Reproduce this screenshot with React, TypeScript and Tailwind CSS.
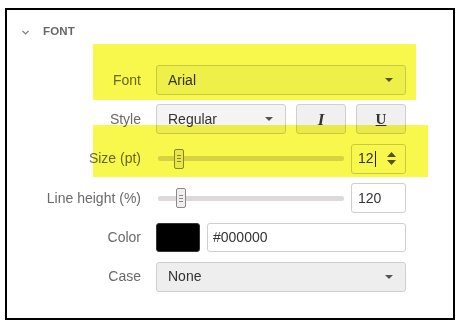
import React from "react";

const Caret = () => (
  <svg width="8" height="4" viewBox="0 0 8 4" className="shrink-0">
    <polygon points="0,0 8,0 4,4" fill="#555" />
  </svg>
);

const Spinner = () => (
  <svg width="9" height="13" viewBox="0 0 9 13" className="shrink-0">
    <polygon points="4.5,0 9,5 0,5" fill="#555" />
    <polygon points="0,8 9,8 4.5,13" fill="#555" />
  </svg>
);

const Label = ({ children }: { children: React.ReactNode }) => (
  <div className="w-[134px] shrink-0 text-right text-[14px] text-[#6a6a6a]">{children}</div>
);

const Row = ({ label, children }: { label: string; children: React.ReactNode }) => (
  <div className="flex h-[30px] items-center">
    <Label>{label}</Label>
    <div className="ml-[15px] flex w-[250px] items-center">{children}</div>
  </div>
);

const Select = ({ value, className }: { value: string; className?: string }) => (
  <div
    className={
      "flex h-[30px] items-center justify-between rounded-[3px] border border-[#cfcfcf] pl-[11px] pr-[12px] text-[14px] text-[#333] " +
      (className ?? "")
    }
  >
    <span>{value}</span>
    <Caret />
  </div>
);

const Slider = ({ thumb }: { thumb: number }) => (
  <div className="relative flex h-[30px] w-[190px] items-center">
    <div className="mx-[2px] h-[5px] flex-1 rounded-[2px] bg-[#ddd8da]" />
    <div
      className="absolute top-[5px] flex h-[20px] w-[10px] flex-col items-center justify-center gap-[2px] rounded-[2px] border border-[#8a8a8a] bg-[#f0eeee]"
      style={{ left: thumb }}
    >
      <div className="h-px w-[4px] bg-[#888]" />
      <div className="h-px w-[4px] bg-[#888]" />
      <div className="h-px w-[4px] bg-[#888]" />
    </div>
  </div>
);

export default function App() {
  return (
    <div className="h-[324px] w-[461px] bg-white pl-[5px] pt-[8px]" style={{ fontFamily: '"Liberation Sans", Arial, sans-serif' }}>
      <div className="relative h-[312px] w-[450px] border-2 border-black">
        <div className="ml-[15px] mt-[12px] flex h-[20px] items-center">
          <svg width="7" height="5" viewBox="0 0 7 5" className="mr-[14px]">
            <polyline points="0.5,0.8 3.5,3.8 6.5,0.8" fill="none" stroke="#777" strokeWidth="1.2" />
          </svg>
          <span className="text-[11.5px] font-bold tracking-[0.2px] text-[#666]">FONT</span>
        </div>

        <div className="mt-[23px] flex flex-col gap-[9.4px]">
          <Row label="Font">
            <Select value="Arial" className="h-[29px] w-full bg-[#f6f6f6]" />
          </Row>
          <Row label="Style">
            <Select value="Regular" className="w-[130px] bg-[#f4f4f4]" />
            <div className="ml-[10px] flex h-[30px] w-[50px] items-center justify-center rounded-[3px] border border-[#cfcfcf] bg-[#f0f0f0] text-[17px] font-bold italic text-[#333]" style={{ fontFamily: '"Liberation Serif", serif' }}>
              I
            </div>
            <div className="ml-[10px] flex h-[30px] w-[50px] items-center justify-center rounded-[3px] border border-[#cfcfcf] bg-[#f0f0f0] text-[15px] font-bold text-[#333] underline" style={{ fontFamily: '"Liberation Serif", serif' }}>
              U
            </div>
          </Row>
          <Row label="Size (pt)">
            <Slider thumb={18} />
            <div className="ml-[5px] flex h-[30px] w-[55px] items-center justify-between rounded-[3px] border border-[#cfcfcf] bg-white pl-[6px] pr-[9px] text-[14px] text-[#333]">
              <span className="flex items-center">
                12<span className="ml-px inline-block h-[16px] w-px bg-[#222]" />
              </span>
              <Spinner />
            </div>
          </Row>
          <Row label="Line height (%)">
            <Slider thumb={20} />
            <div className="ml-[5px] flex h-[30px] w-[55px] items-center rounded-[3px] border border-[#cfcfcf] bg-white pl-[6px] text-[14px] text-[#333]">
              120
            </div>
          </Row>
          <Row label="Color">
            <div className="h-[29px] w-[44px] rounded-[3px] border border-[#333] bg-black" />
            <div className="ml-[7px] flex h-[29px] flex-1 items-center rounded-[3px] border border-[#cfcfcf] bg-white pl-[5px] text-[14px] text-[#333]">
              #000000
            </div>
          </Row>
          <Row label="Case">
            <Select value="None" className="w-full bg-[#eeeeee]" />
          </Row>
        </div>

        <div className="pointer-events-none absolute left-[86px] top-[34px] h-[56px] w-[323px] bg-[#f8f84c] mix-blend-multiply" />
        <div className="pointer-events-none absolute left-[86px] top-[115px] h-[52px] w-[335px] bg-[#f8f84c] mix-blend-multiply" />
      </div>
    </div>
  );
}
